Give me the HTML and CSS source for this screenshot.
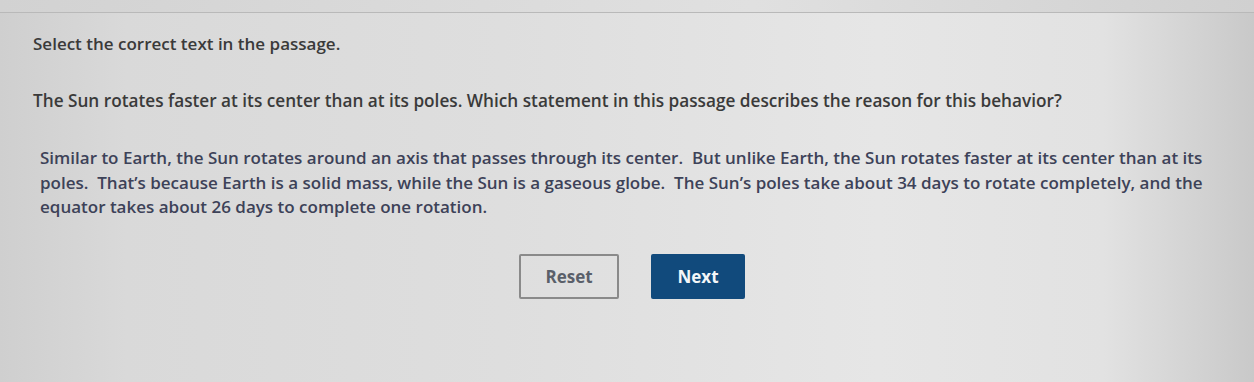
FILE: index.html
```html
<!DOCTYPE html>
<html>
<head>
<meta charset="utf-8">
<link rel="stylesheet" href="styles.css">
</head>
<body>
<div class="page">
  <div class="topbar"></div>
  <main class="content">
    <p class="instruction">Select the correct text in the passage.</p>
    <p class="question">The Sun rotates faster at its center than at its poles. Which statement in this passage describes the reason for this behavior?</p>
    <p class="passage">Similar to Earth, the Sun rotates around an axis that passes through its center.&nbsp; But unlike Earth, the Sun rotates faster at its center than at its poles.&nbsp; That’s because Earth is a solid mass, while the Sun is a gaseous globe.&nbsp; The Sun’s poles take about 34 days to rotate completely, and the equator takes about 26 days to complete one rotation.</p>
    <div class="actions">
      <button class="btn reset">Reset</button>
      <button class="btn next">Next</button>
    </div>
  </main>
</div>
</body>
</html>
```
FILE: styles.css
```css
html, body {
  margin: 0;
  padding: 0;
}
body {
  width: 1254px;
  height: 382px;
  overflow: hidden;
  font-family: "Open Sans", "DejaVu Sans", sans-serif;
  background: linear-gradient(90deg, #cfcfcf 0%, #d9d9d9 10%, #dedede 40%, #e6e6e6 70%, #e2e2e2 88%, #c9c9c9 100%);
}
.page {
  height: 382px;
}
.topbar {
  height: 12px;
  border-bottom: 1px solid #b9b9b9;
  background: linear-gradient(90deg, #d2d2d2, #e0e0e0 60%, #d0d0d0);
}
.content {
  padding: 0 0 0 33px;
}
.instruction {
  margin: 19px 0 0;
  font-size: 17px;
  font-weight: 600;
  color: #3a3a3a;
  line-height: 24px;
}
.question {
  margin: 33px 0 0;
  font-size: 17.2px;
  font-weight: 600;
  color: #3a3a3a;
  line-height: 24px;
}
.passage {
  margin: 33px 0 0 7px;
  width: 1172px;
  font-size: 17px;
  font-weight: 600;
  color: #3d4258;
  line-height: 24.5px;
}
.actions {
  display: flex;
  gap: 32px;
  margin: 34px 0 0 486px;
}
.btn {
  font-family: "Open Sans", "DejaVu Sans", sans-serif;
  font-size: 17px;
  font-weight: 700;
  height: 45px;
  border-radius: 2px;
}
.reset {
  width: 100px;
  background: transparent;
  border: 2px solid #8a8a8a;
  color: #5a5f6a;
}
.next {
  width: 94px;
  background: #114a7c;
  border: none;
  color: #f4f6f8;
}
```
